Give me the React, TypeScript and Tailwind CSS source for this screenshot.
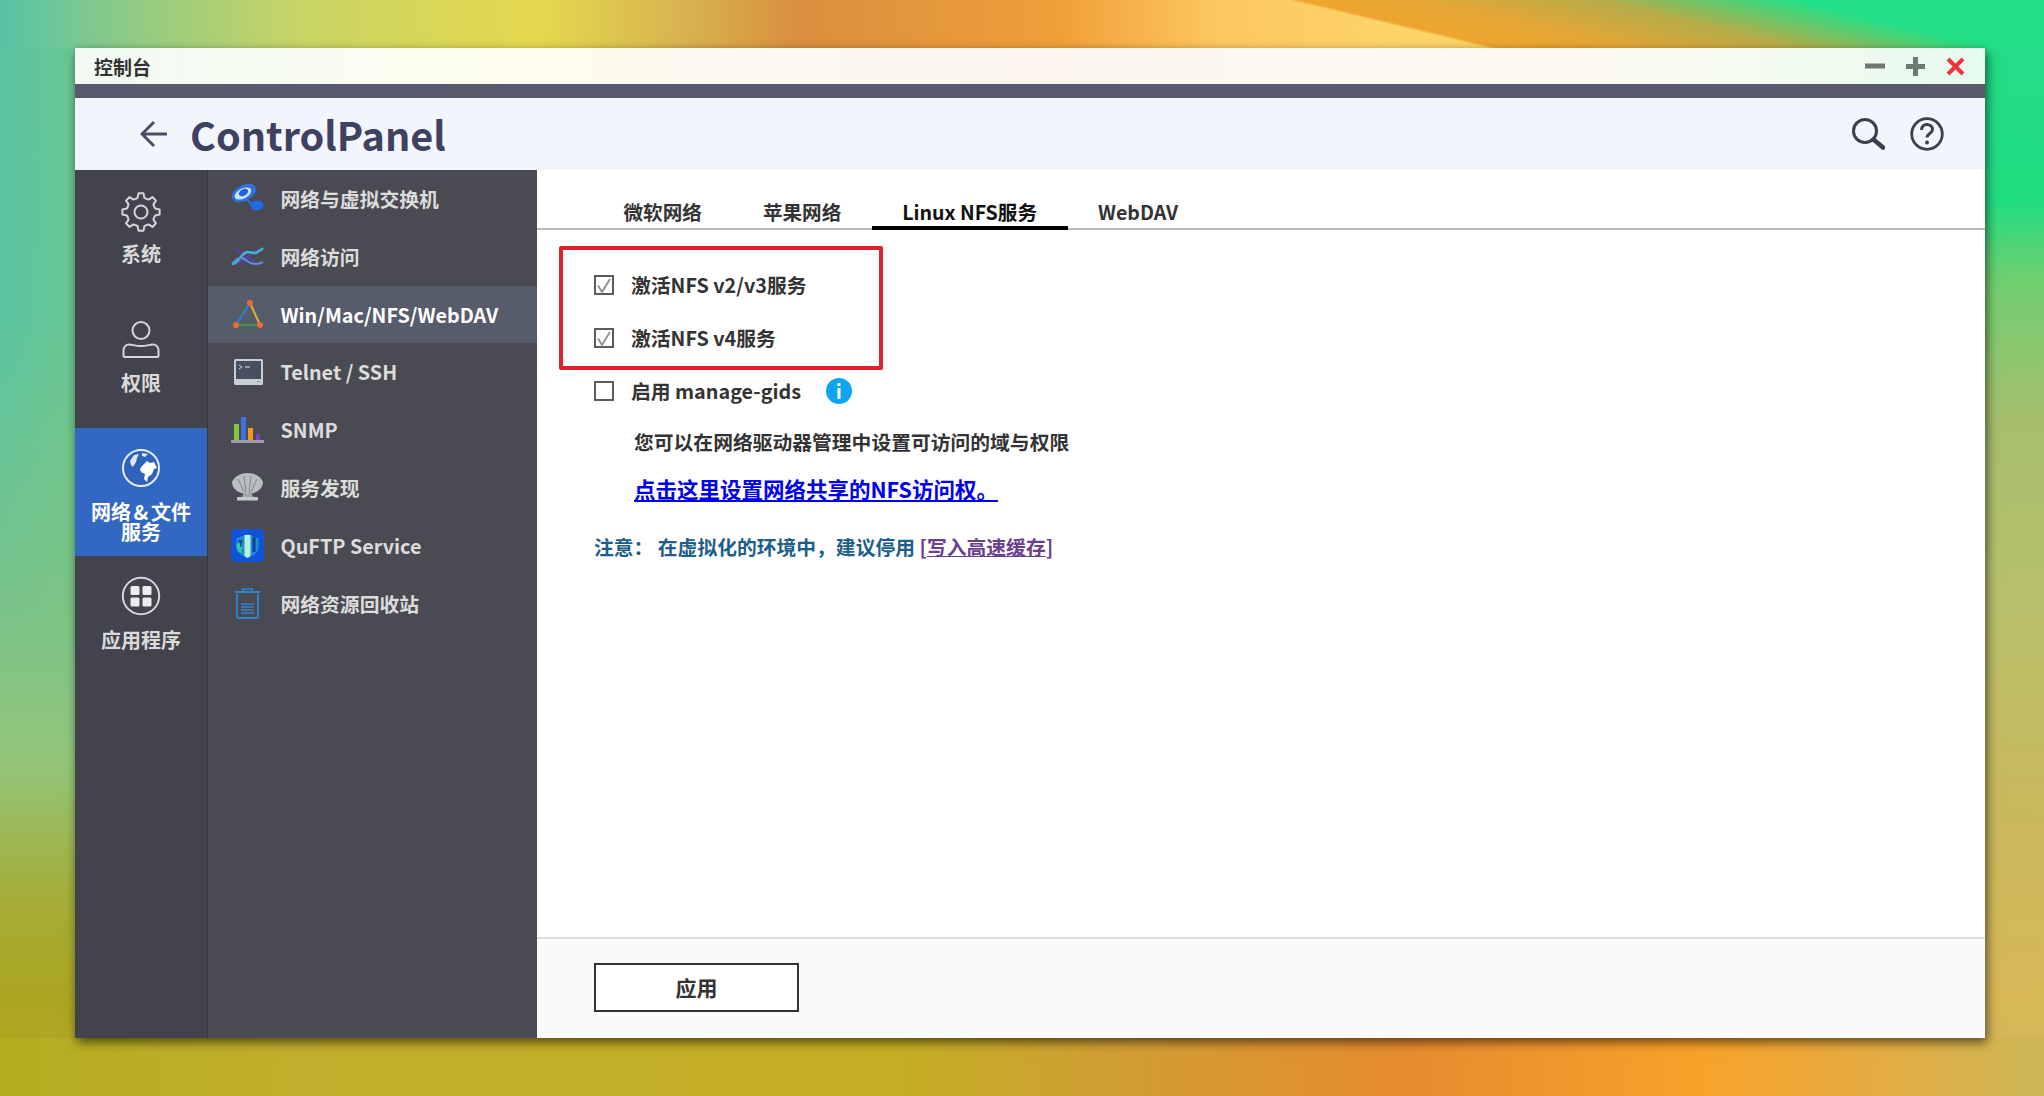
const gearPath = (() => {
  // 8 toothed outline for the system icon
  const pts: string[] = [];
  const n = 8;
  for (let i = 0; i < n; i++) {
    const a = (i / n) * Math.PI * 2;
    const step = (Math.PI * 2) / n;
    const p = [
      [14.2, a - step * 0.5],
      [14.6, a - step * 0.3],
      [18.8, a - step * 0.17],
      [18.8, a + step * 0.17],
      [14.6, a + step * 0.3],
    ];
    for (const [r, t] of p) {
      pts.push(`${(20 + r * Math.cos(t)).toFixed(2)} ${(20 + r * Math.sin(t)).toFixed(2)}`);
    }
  }
  return "M" + pts.join("L") + "Z";
})();

const GearIcon = () => (
  <svg width="40" height="40" viewBox="0 0 40 40" fill="none" stroke="#d5d5d8" strokeWidth="2" strokeLinejoin="round">
    <path d={gearPath} />
    <circle cx="20" cy="20" r="6.5" />
  </svg>
);

const UserIcon = () => (
  <svg width="40" height="40" viewBox="0 0 40 40" fill="none" stroke="#d5d5d8" strokeWidth="2">
    <circle cx="20" cy="10.5" r="8.5" />
    <path d="M8 24.5c3.5 0 6 1.6 12 1.6s8.500-1.600 12-1.600c3 0 5.500 2.500 5.500 6v5.200q0 1.300-1.300 1.300H3.800q-1.300 0-1.300-1.300v-5.200c0-3.500 2.500-6 5.500-6z" />
  </svg>
);

const GlobeIcon = () => (
  <svg width="40" height="40" viewBox="0 0 40 40">
    <circle cx="20" cy="20" r="18" fill="#2f62bb" stroke="#e6ecf8" strokeWidth="2" />
    <path d="M21 18l5-5 3 2 4-1 3 6-3 1-2 5-4 3-1 5-3-3 1-5-4-2-1-3z" fill="#fff" />
    <path d="M9 13l4-6 5-1-2 4-1 4-3 5-2-2z" fill="#dfe8f8" />
    <path d="M21 5l6 1-3 3-3-1z" fill="#dfe8f8" />
  </svg>
);

const AppsIcon = () => (
  <svg width="40" height="40" viewBox="0 0 40 40">
    <circle cx="20" cy="20" r="18.200" fill="none" stroke="#d5d5d8" strokeWidth="2" />
    <rect x="9.500" y="10" width="9" height="9" rx="1.500" fill="#ececee" />
    <rect x="21.500" y="10" width="9" height="9" rx="1.500" fill="#ececee" />
    <rect x="9.500" y="21.500" width="9" height="9" rx="1.500" fill="#ececee" />
    <rect x="21.500" y="21.500" width="9" height="9" rx="1.500" fill="#ececee" />
  </svg>
);

const SwitchIcon = () => (
  <svg width="33" height="33" viewBox="0 0 33 33">
    <ellipse cx="13" cy="11" rx="13" ry="8" transform="rotate(-28 13 11)" fill="#2f6fe0" />
    <ellipse cx="12" cy="11.500" rx="9" ry="5" transform="rotate(-28 12 11.500)" fill="#cfe0fa" />
    <ellipse cx="12.500" cy="10.500" rx="5" ry="3.200" transform="rotate(-28 12.500 10.500)" fill="#1e63e0" />
    <path d="M16 18l6 5" stroke="#2f6fe0" strokeWidth="2" />
    <ellipse cx="26" cy="23.500" rx="6.500" ry="5" fill="#1f6be6" />
  </svg>
);

const AccessIcon = () => (
  <svg width="33" height="33" viewBox="0 0 33 33" fill="none">
    <path d="M4 9l24 16M28 9L8 23" stroke="#5b3fc0" strokeWidth="1.600" />
    <path d="M1 24c7 0 9-12 16-12 5 0 7 4 15-4" stroke="#48b4d8" strokeWidth="2.400" />
    <path d="M1 24c5-7 10-8 15-3 5 4 10 4 16 1" stroke="#5a8fd0" strokeWidth="2" />
  </svg>
);

const TriangleIcon = () => (
  <svg width="33" height="33" viewBox="0 0 33 33" fill="none">
    <path d="M19 5L5 27" stroke="#2b7fd4" strokeWidth="2" />
    <path d="M19 5l10 22" stroke="#e6b02e" strokeWidth="2" />
    <path d="M5 27h24" stroke="#3fa34a" strokeWidth="1.600" />
    <circle cx="19" cy="5" r="3" fill="#ee6a3a" />
    <circle cx="5" cy="27" r="3" fill="#ee6a3a" />
    <circle cx="29" cy="27" r="3" fill="#ee6a3a" />
  </svg>
);

const TelnetIcon = () => (
  <svg width="33" height="33" viewBox="0 0 33 33" fill="none">
    <rect x="3" y="3" width="29" height="26" rx="1.500" fill="#c9ced4" />
    <rect x="5" y="5" width="25" height="18" fill="#46505e" />
    <path d="M8 9l3 2-3 2" stroke="#c9ced4" strokeWidth="1" />
    <path d="M14 11h5" stroke="#c9ced4" strokeWidth="1.200" />
    <path d="M26 25.500h3" stroke="#8d949c" strokeWidth="1" />
  </svg>
);

const BarsIcon = () => (
  <svg width="33" height="33" viewBox="0 0 33 33">
    <rect x="3" y="10" width="5" height="16" fill="#84c53a" />
    <rect x="10" y="3" width="5" height="23" fill="#3f6fe0" />
    <rect x="17" y="14" width="5" height="12" fill="#ef9a1f" />
    <rect x="25" y="20" width="4" height="6" fill="#7a3fd0" />
    <rect x="0" y="26" width="33" height="3" fill="#9a9da3" />
  </svg>
);

const DishIcon = () => (
  <svg width="33" height="33" viewBox="0 0 33 33">
    <path d="M1 11C3 6 9 2 16.500 2S30 6 32 11c0 6-6 12-15.500 12S1 17 1 11z" fill="#b9bec0" />
    <path d="M7 8l6 13M13 5l2 17M20 5l-2 17M26 8l-6 13" stroke="#85898e" strokeWidth="1" />
    <path d="M12 23h9l1 3h-11z" fill="#a3a7aa" />
    <rect x="6" y="26" width="21" height="3.500" rx="1" fill="#c7cacc" />
  </svg>
);

const FtpIcon = () => (
  <svg width="33" height="33" viewBox="0 0 33 33">
    <rect x="0" y="0" width="33" height="33" rx="5" fill="#1152d8" />
    <path d="M16.500 5l11 4.500v9c0 5-5 8-11 10.500-6-2.500-11-5.500-11-10.500v-9z" fill="#1f8fc8" />
    <path d="M13.500 6h6v21l-3 2-3-2z" fill="#b8f0e0" />
    <path d="M5.500 15c3-1 5 0 6 2l-2 7c-2-1.500-4-3.500-4-6z" fill="#38c8a0" />
    <path d="M21.500 8h3v9h-3zM21.500 17h3v6h-3z" fill="#0d3fa8" />
    <path d="M7.500 11h4v2h-4zM9 13h1.500v5H9z" fill="#0d3fa8" />
  </svg>
);

const TrashIcon = () => (
  <svg width="33" height="33" viewBox="0 0 33 33" fill="none" stroke="#2f85d0">
    <path d="M4 5h25" strokeWidth="2" />
    <path d="M12 4V2h9v2" strokeWidth="1.600" />
    <path d="M6 7v22q0 2 2 2h17q2 0 2-2V7" strokeWidth="1.800" />
    <path d="M10 17h13M10 20h13M10 23h13M10 26h13" strokeWidth="1.400" />
  </svg>
);

const Checkbox = ({ checked }: { checked?: boolean }) => (
  <span className="relative block h-[20px] w-[20px] shrink-0 border-2 border-[#5c5c5c] bg-white">
    {checked && (
      <svg className="absolute left-[-1px] top-[-1px]" width="18" height="18" viewBox="0 0 18 18" fill="none">
        <path d="M3 9.500l4 6.500 8-13" stroke="#8e8e8e" strokeWidth="1.800" />
      </svg>
    )}
  </span>
);

const rail = [
  { label: ["系统"], icon: <GearIcon />, gap: "mt-[12px]" },
  { label: ["权限"], icon: <UserIcon />, gap: "mt-[13px]" },
  { label: ["网络 & 文件", "服务"], icon: <GlobeIcon />, gap: "mt-[14px]", active: true },
  { label: ["应用程序"], icon: <AppsIcon />, gap: "mt-[14px]" },
];

const menu = [
  { label: "网络与虚拟交换机", icon: <SwitchIcon /> },
  { label: "网络访问", icon: <AccessIcon /> },
  { label: "Win/Mac/NFS/WebDAV", icon: <TriangleIcon />, active: true },
  { label: "Telnet / SSH", icon: <TelnetIcon /> },
  { label: "SNMP", icon: <BarsIcon /> },
  { label: "服务发现", icon: <DishIcon /> },
  { label: "QuFTP Service", icon: <FtpIcon /> },
  { label: "网络资源回收站", icon: <TrashIcon /> },
];

const tabs = [
  { label: "微软网络" },
  { label: "苹果网络" },
  { label: "Linux NFS服务", active: true },
  { label: "WebDAV" },
];

export default function App() {
  return (
    <div className="h-[1096px] w-[2044px] overflow-hidden pl-[75px] pt-[48px] font-['Noto_Sans_CJK_SC','Noto_Sans',sans-serif] font-bold [background:linear-gradient(13.500deg,transparent_66.300%,#eda62f_66.800%,#e6a735_72%,#b8ab48_80%,#22e088_89%,#22e088_100%)_top/100%_48px_no-repeat,linear-gradient(90deg,#55c4a5_0,#8fcb85_130px,#c8d565_300px,#e5d84e_540px,#d8b450_680px,#d98f3e_800px,#f0a03a_1060px,#fdc860_1220px,#fdd468_1400px,#fdd468_2044px)_top/100%_48px_no-repeat,linear-gradient(90deg,#b4ad20_0,#c2ae2c_300px,#c4ae24_900px,#cf9f33_1100px,#e68b2f_1400px,#f8a22a_1700px,#e2ad45_1900px,#ccb655_2044px)_bottom/100%_58px_no-repeat,linear-gradient(180deg,#25dc8c_0,#20dd80_200px,#70cf70_280px,#a6bf6d_420px,#b8c06c_600px,#c8b95c_800px,#d8b857_1000px,#ccb655_1096px)_right/59px_100%_no-repeat,linear-gradient(90deg,transparent_0,rgba(130,200,125,0.4)_75px)_left_top/75px_640px_no-repeat,linear-gradient(180deg,#5ac4a2_0,#58c5a2_300px,#78c38b_600px,#93c67a_760px,#a5ac35_905px,#aba622_1000px,#b4a822_1096px)_left/75px_100%_no-repeat]">
      <div className="flex h-[990px] w-[1910px] flex-col shadow-[2px_4px_10px_rgba(0,0,0,0.6)]">
        <div className="flex h-[36px] items-center justify-between bg-[linear-gradient(90deg,#f0faf3_0%,#fdfdee_20%,#fbf5ee_50%,#fdfbf0_80%,#e6fbee_100%)] pl-[19px] pr-[20px]">
          <span className="text-[19px] leading-none text-[#333]">控制台</span>
          <div className="flex items-center gap-[21px]">
            <svg width="20" height="18" viewBox="0 0 20 18">
              <rect x="0" y="6.500" width="20" height="5" fill="#6c7a72" />
            </svg>
            <svg width="19" height="19" viewBox="0 0 19 19">
              <path d="M7 0h5v7h7v5h-7v7H7v-7H0V7h7z" fill="#6c7a72" />
            </svg>
            <svg width="19" height="19" viewBox="0 0 19 19">
              <path d="M2 2l15 15M17 2L2 17" stroke="#f0333a" strokeWidth="4" />
            </svg>
          </div>
        </div>
        <div className="h-[14px] bg-[#5a5a6e]" />
        <div className="flex h-[72px] items-center justify-between bg-[#f3f5fd] pl-[65px] pr-[41px]">
          <div className="flex items-center gap-[22px]">
            <svg width="28" height="28" viewBox="0 0 28 28" fill="none" stroke="#4c4e68" strokeWidth="3">
              <path d="M27 14H2M14 2L2 14l12 12" />
            </svg>
            <span className="text-[39.600px] leading-none text-[#3f4160]">ControlPanel</span>
          </div>
          <div className="flex items-center gap-[25px]">
            <svg width="34" height="34" viewBox="0 0 34 34" fill="none" stroke="#3d3f4f">
              <circle cx="14" cy="14" r="11.500" strokeWidth="3" />
              <path d="M22.500 22.500l9.500 8" strokeWidth="4.500" strokeLinecap="round" />
            </svg>
            <svg width="34" height="34" viewBox="0 0 34 34" fill="none" stroke="#3d3f4f">
              <circle cx="17" cy="17" r="15.300" strokeWidth="2.800" />
              <path d="M11.500 13c0-3.500 2.500-5.500 5.500-5.500s5.500 2 5.500 5c0 4-5.500 4-5.500 8" strokeWidth="3" />
              <circle cx="17" cy="25.500" r="2" fill="#3d3f4f" stroke="none" />
            </svg>
          </div>
        </div>
        <div className="flex flex-1">
          <div className="w-[133px] border-r border-[#383840] bg-[#43434d] pt-[2px]">
            {rail.map((item) => (
              <div
                key={item.label[0]}
                className={`flex h-[128px] flex-col items-center pt-[20px] ${item.active ? "bg-[#3268c4] text-white" : "text-[#dadada]"}`}
              >
                {item.icon}
                <div className={`${item.gap} text-center text-[20px] leading-[20px] [word-spacing:-2px]`}>
                  {item.label.map((line) => (
                    <div key={line} className="whitespace-nowrap">{line}</div>
                  ))}
                </div>
              </div>
            ))}
          </div>
          <div className="w-[329px] bg-[#4a4a52]">
            {menu.map((item) => (
              <div
                key={item.label}
                className={`flex h-[57.800px] items-center gap-[17px] pl-[22.500px] text-[19.800px] ${item.active ? "bg-[#565c6a] text-white" : "text-[#dcdcdc]"}`}
              >
                {item.icon}
                <span>{item.label}</span>
              </div>
            ))}
          </div>
          <div className="flex flex-1 flex-col bg-white text-[#333]">
            <div className="flex-1">
              <div className="flex h-[60px] items-end border-b-2 border-[#bbbbbb] pl-[56px]">
                {tabs.map((tab) => (
                  <div
                    key={tab.label}
                    className={`-mb-[2px] border-b-4 px-[30.500px] text-[19.600px] leading-[28px] ${tab.active ? "border-black text-[#111]" : "border-transparent text-[#333]"}`}
                  >
                    {tab.label}
                  </div>
                ))}
              </div>
              <div className="ml-[22px] mt-[16px] h-[124px] w-[324px] rounded-[2px] border-4 border-[#e0202c] pl-[31px] pt-[8.500px] text-[19.800px]">
                <div className="flex h-[53px] items-center gap-[17px]">
                  <Checkbox checked />
                  <span>激活NFS v2/v3服务</span>
                </div>
                <div className="flex h-[53px] items-center gap-[17px]">
                  <Checkbox checked />
                  <span>激活NFS v4服务</span>
                </div>
              </div>
              <div className="ml-[57px] flex h-[42px] items-center gap-[17px] text-[19.800px]">
                <Checkbox />
                <span>启用 manage-gids</span>
                <svg width="26" height="26" viewBox="0 0 26 26" className="ml-[8px]">
                  <circle cx="13" cy="13" r="13" fill="#0ea5f0" />
                  <rect x="11.500" y="5" width="3" height="3" fill="#fff" />
                  <rect x="11.500" y="10" width="3" height="11" fill="#fff" />
                </svg>
              </div>
              <p className="ml-[97px] mt-[16px] text-[19.800px] leading-[28px]">您可以在网络驱动器管理中设置可访问的域与权限</p>
              <a className="ml-[97px] mt-[19px] block text-[21.500px] leading-[28px] text-[#0000ee] underline">点击这里设置网络共享的NFS访问权。</a>
              <p className="ml-[57px] mt-[30px] text-[19.800px] leading-[28px] text-[#1d5f8a]">
                注意： 在虚拟化的环境中，建议停用 <span className="text-[#6b3f8f]">[<span className="underline">写入高速缓存</span>]</span>
              </p>
            </div>
            <div className="h-[101px] border-t-2 border-[#dddddd] bg-[#fafafa] pl-[57px] pt-[24px]">
              <button className="h-[49px] w-[205px] border-2 border-[#333] bg-white text-[21px] text-[#333]">应用</button>
            </div>
          </div>
        </div>
      </div>
    </div>
  );
}
